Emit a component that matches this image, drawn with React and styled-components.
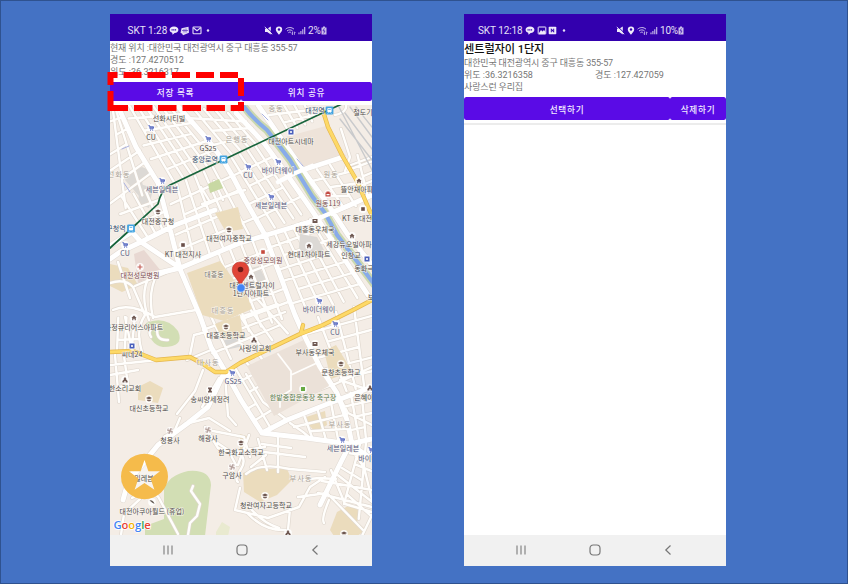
import React from "react";
import styled, { createGlobalStyle } from "styled-components";

const GlobalStyle = createGlobalStyle`
  body { margin: 0; }
  * { box-sizing: border-box; }
  svg { flex: none; }
`;

const Slide = styled.main`
  width: 848px;
  height: 584px;
  padding: 13px 121px 17px 109px;
  border: 1px solid #2f528f;
  background: #4472c4;
  display: flex;
  justify-content: space-between;
  overflow: hidden;
  font-family: Roboto, "Noto Sans CJK KR", sans-serif;
`;

const Phone = styled.section`
  position: relative;
  width: 262px;
  height: 552px;
  background: #fff;
  display: flex;
  flex-direction: column;
`;

const StatusBar = styled.header`
  height: 27px;
  flex: none;
  padding: 6px 0 0 ${(p) => p.$start}px;
  background: #3300ae;
  color: #e6e0f6;
  font-size: 10px;
  line-height: 21px;
  display: flex;
  align-items: center;
  white-space: nowrap;
`;

const Carrier = styled.span`
  flex: none;
  width: ${(p) => p.$width}px;
  letter-spacing: ${(p) => p.$track || 0}px;
`;

const StatusIcons = styled.span`
  flex: none;
  width: ${(p) => p.$width}px;
  height: 10px;
  display: flex;
  gap: ${(p) => p.$gap || 1.5}px;
  align-items: center;
`;

const Battery = styled.span`
  display: flex;
  align-items: center;
  gap: 0.5px;
  letter-spacing: -0.2px;
`;

const Info = styled.div`
  height: ${(p) => p.$height}px;
  flex: none;
  padding-top: ${(p) => p.$top}px;
  color: #757575;
  font-size: 9px;
  line-height: 12.3px;
  white-space: nowrap;
`;

const InfoLine = styled.div`
  height: 12.3px;
  letter-spacing: ${(p) => p.$track || 0}px;
`;

const PlaceName = styled.h1`
  margin: 0;
  height: 15px;
  font-size: 11.2px;
  letter-spacing: -0.1px;
  font-weight: 500;
  line-height: 15px;
  color: #111;
`;

const Coordinates = styled(InfoLine)`
  display: grid;
  grid-template-columns: 131px 131px;
`;

const ButtonRow = styled.div`
  display: grid;
  grid-template-columns: ${(p) => p.$columns};
  height: ${(p) => p.$height}px;
  flex: none;
`;

const ActionButton = styled.button`
  border: 0;
  border-radius: 2.5px;
  padding: 0;
  background: #5a0be6;
  color: #f4edff;
  font: 500 8.6px Roboto, "Noto Sans CJK KR", sans-serif;
  letter-spacing: 0.75px;
`;

const MapArea = styled.div`
  height: 430px;
  margin-top: 4px;
  flex: none;
  overflow: hidden;
`;

const MapDrawing = styled.svg`
  display: block;
  width: 262px;
  height: 430px;
  font-family: "Noto Sans CJK KR", sans-serif;
`;

const Divider = styled.div`
  height: 2px;
  margin-top: 3px;
  background: #ececec;
`;

const NavBar = styled.nav`
  height: 31px;
  flex: none;
  margin-top: auto;
  background: #f1f1f1;
  display: flex;
  align-items: center;
  padding: 0 ${(p) => 103 - p.$start}px 1px ${(p) => p.$start}px;
  justify-content: space-between;
`;

const Highlight = styled.svg`
  position: absolute;
  left: -3px;
  top: 57px;
  width: 138px;
  height: 42px;
`;

/* ---------- status icons ---------- */
const ChatIcon = () => (
  <svg width="10" height="9" viewBox="0 0 10 9">
    <path d="M5 .5C2.200.5.600 1.800.600 3.700c0 1.600 1.100 2.600 2.600 3L3.600 8.700 5.600 7C8 6.800 9.400 5.500 9.400 3.700 9.400 1.800 7.800.5 5 .5Z" fill="#efeafa" />
    <path d="M2.500 3.800h5" stroke="#3300ae" strokeWidth="1.200" strokeDasharray="1.200 .5" />
  </svg>
);
const BadgeIcon = () => (
  <svg width="10" height="10" viewBox="0 0 10 10">
    <path d="M1.500 2.200 8.500.7l.5 6-6 2.500-1-1.800L.5 7Z" fill="#e3dcf5" />
    <path d="M2 4.500h6M4 3v3.500M6 2.500v4" stroke="#5a35bd" strokeWidth=".7" />
  </svg>
);
const MailIcon = () => (
  <svg width="10" height="9" viewBox="0 0 10 9" fill="none" stroke="#e6e0f6" strokeWidth="1.100">
    <rect x="1" y="1" width="8" height="6.800" rx=".7" />
    <path d="m1.300 1.700 3.700 3 3.700-3" />
  </svg>
);
const PictureIcon = () => (
  <svg width="10" height="9" viewBox="0 0 10 9">
    <rect x="1.200" y="1" width="7.600" height="7" rx=".5" fill="none" stroke="#efeafa" />
    <path d="m2 7 2-3 1.500 1.500L7 4l1.500 2v2H2Z" fill="#efeafa" />
  </svg>
);
const NewsIcon = () => (
  <svg width="9" height="9" viewBox="0 0 9 9">
    <rect x=".7" y=".7" width="7.600" height="7.600" rx=".8" fill="#efeafa" />
    <path d="M3.300 6.300V2.800l2.400 3.400V2.700" stroke="#3300ae" fill="none" />
  </svg>
);
const DotIcon = () => (
  <svg width="9" height="9" viewBox="0 0 9 9"><circle cx="5" cy="4.500" r="1.200" fill="#e6e0f6" /></svg>
);
const MuteIcon = () => (
  <svg width="9" height="9" viewBox="0 0 9 9">
    <path d="M1 2.800h2.200L6.800.6v7.800L3.200 6H1Z" fill="#efeafa" />
    <path d="M1.600.4 9 7.600" stroke="#3300ae" strokeWidth="1" />
    <path d="m.8 1 7.400 7.300" stroke="#efeafa" strokeWidth="1" />
  </svg>
);
const PinIcon = () => (
  <svg width="8" height="9" viewBox="0 0 8 9">
    <path d="M4 .4a3.200 3.200 0 0 0-3.200 3.200c0 2 3.200 5.200 3.200 5.200s3.200-3.200 3.200-5.200A3.200 3.200 0 0 0 4 .4Z" fill="#efeafa" />
    <circle cx="4" cy="3.500" r="1.200" fill="#3300ae" />
  </svg>
);
const WifiIcon = () => (
  <svg width="11" height="10" viewBox="0 0 11 10" fill="none" stroke="#cfc4ed" strokeWidth="1">
    <path d="M.6 3.200C3 1 6.700 1 9 3.200M2 5c1.700-1.500 4-1.500 5.600 0M3.400 6.700c.8-.8 2-.8 2.800 0" />
    <path d="M7.500 5.700v3l-1-1M9.400 8.800v-3l1 1" strokeWidth=".8" />
  </svg>
);
const SignalIcon = () => (
  <svg width="8" height="9" viewBox="0 0 8 9" stroke="#cfc4ed" strokeWidth="1.100">
    <path d="M1 8.200V6.500M2.900 8.200V5M4.800 8.200V3.200M6.700 8.200V1" />
  </svg>
);
const BatteryIcon = () => (
  <svg width="6" height="9" viewBox="0 0 6 9">
    <path d="M.5 1.400H2V.4h2v1h1.500v7H.5Z" fill="#cbc0ea" />
    <path d="M3.400 2.400 2 4.900h2L2.600 7.500" stroke="#3300ae" fill="none" strokeWidth=".7" />
  </svg>
);

function SystemNav({ start }) {
  return (
    <NavBar $start={start}>
      <svg width="12" height="12" viewBox="0 0 12 12" stroke="#858585" strokeWidth="1.200">
        <path d="M2 1.500v9M6 1.500v9M10 1.500v9" />
      </svg>
      <svg width="12" height="12" viewBox="0 0 12 12">
        <rect x="1" y="1" width="10" height="10" rx="3.200" fill="none" stroke="#777" strokeWidth="1.200" />
      </svg>
      <svg width="12" height="12" viewBox="0 0 12 12">
        <path d="M8.500 1.500 3.800 6l4.700 4.500" fill="none" stroke="#777" strokeWidth="1.200" />
      </svg>
    </NavBar>
  );
}

/* ---------- map data ---------- */
const majorRoads = [
  "M117 104 136 147 158 183 169 225 180 269 200 316 211 347 225 371 241 400 262 433",
  "M110 259 120 252 141 242 180 268",
  "M141 242 132 232 110 246M141 242 175 225 215 210",
  "M150 275 180 268 240 243 310 222 350 205 372 195",
  "M176 104 208 140 223 160 233 177 245 200 265 235 295 315 303 333 320 367 337 393 347 420 352 444",
  "M236 113 264 143 288 176 311 209 345 260 368 295",
  "M258 105 280 137 305 173 327 203 348 235 372 265",
  "M262 433 306 438 350 444 372 439",
  "M262 433 287 420 330 403 372 387",
  "M225 371 208 407 188 423 158 445 128 482 123 500",
  "M350 444 338 468 320 505",
  "M350 444 372 459",
  "M293 174 303 170 343 157",
];

const minorRoads = [
  "M110 283Q125 278 133 287L145 315M118 262 130 298M150 275Q139 293 149 320M158 272Q147 292 153 318M135 286 177 268",
  "M113 310Q130 302 155 317L196 310M145 315Q135 330 142 352M125 317 132 350",
  "M151 337Q146 330 158 325Q154 341 168 340M190 355 194 335 206 332",
  "M110 365 157 360M115 355 119 402M124 356 128 385M110 375 138 370M110 389 128 385",
  "M203 370 195 391 177 414M219 378 202 407M225 374 228 416 236 425M211 350 187 360",
  "M180 418 174 432 165 436 150 455M185 424 209 418 230 431M205 427 218 448 239 455",
  "M213 431 244 437 250 457M210 438 228 450 236 465M236 450Q248 458 241 469T238 482",
  "M140 499 124 514 121 535M132 498Q153 485 160 500L178 534M123 482Q132 471 153 450",
  "M193 486 191 491 200 504 197 516 190 523 188 535",
  "M238 465 249 435M245 450 265 447M246 474Q260 462 290 469L325 472M267 470 258 439M278 472 278 437",
  "M262 444 291 448M264 452 305 457M251 467 266 455M240 488 235 510 268 518 299 507 310 487 325 477",
  "M250 508Q263 523 279 528M248 514Q265 531 285 530M290 509 288 530M298 497 327 493 363 530",
  "M331 470 345 504 372 512M322 481 372 490M318 493 372 507M350 448 364 467 372 500",
  "M324 523Q321 519 329 500M360 540 372 515M300 480 319 478 336 479",
  "M278 354 291 371 291 390 280 397 280 407M291 375 319 362M246 362 263 382",
  "M246 374 263 402 287 420M260 356 273 376M306 395 334 384M290 423 303 432 310 438",
  "M328 376 348 413 372 425M333 385 372 367M340 380 372 391",
  "M201 187 210 202M214 181 223 200M202 204 245 190",
  "M341 129 350 157 345 171M335 115Q348 112 346 104M355 188 372 181M351 165 372 157",
];

/* Each district: four corners and the number of streets in each direction. */
const districts = [
  [[121, 105], [176, 105], [222, 159], [166, 186], 7, 6],
  [[110, 105], [117, 106], [157, 184], [110, 220], 3, 7],
  [[110, 200], [157, 187], [168, 224], [141, 242], 4, 3],
  [[168, 189], [222, 163], [262, 232], [181, 265], 6, 5],
  [[180, 105], [240, 115], [264, 141], [224, 158], 5, 4],
  [[224, 162], [264, 143], [310, 210], [266, 232], 5, 5],
  [[263, 105], [315, 105], [320, 118], [281, 135], 5, 3],
  [[304, 174], [343, 160], [368, 207], [329, 204], 3, 4],
  [[343, 160], [372, 150], [372, 195], [364, 200], 2, 4],
  [[266, 236], [319, 216], [368, 295], [295, 315], 6, 7],
  [[208, 259], [264, 237], [293, 315], [238, 335], 5, 6],
  [[198, 318], [270, 296], [300, 328], [217, 365], 6, 4],
  [[300, 322], [372, 302], [372, 385], [338, 393], 4, 6],
  [[340, 395], [372, 388], [372, 438], [353, 442], 3, 4],
  [[227, 373], [244, 364], [278, 422], [262, 432], 2, 5],
  [[291, 422], [345, 400], [350, 443], [300, 437], 4, 3],
  [[354, 446], [372, 441], [372, 532], [330, 490], 3, 6],
  [[110, 318], [143, 317], [138, 350], [110, 351], 4, 3],
];

function streetPath([a, b, c, d, across, down]) {
  const mix = (p, q, t) => [p[0] + (q[0] - p[0]) * t, p[1] + (q[1] - p[1]) * t];
  const line = (p, q) => `M${p[0].toFixed(1)} ${p[1].toFixed(1)}L${q[0].toFixed(1)} ${q[1].toFixed(1)}`;
  let path = "";
  for (let i = 1; i < across; i += 1) {
    const t = i / across;
    path += line(mix(a, b, t), mix(d, c, i % 3 === 1 ? t : t + 0.02));
  }
  for (let i = 1; i < down; i += 1) {
    const t = i / down;
    const left = mix(a, d, t);
    const right = mix(b, c, t);
    path += line(i % 3 === 2 ? mix(left, right, 1 / across) : left, i % 4 === 3 ? mix(left, right, 1 - 1 / across) : right);
  }
  return path;
}

const blocks = [
  ["#dcd9d5", "M128 173 142 167 152 171 142 181 146 204 125 180Z"],
  ["#dcd9d5", "M140 184 153 188 149 208 138 203Z"],
  ["#dcd9d5", "M246 269 259 266 266 280 247 293Z"],
  ["#d8d7d5", "M221 341 239 337 244 346 225 350Z"],
  ["#eee3d9", "M285 137 326 126 341 155 304 169Z"],
  ["#ebdcbd", "M110 264 128 268 138 285 122 292 110 286Z"],
  ["#ebdcbd", "M138 387 150 381 163 388 158 403 138 400Z"],
  ["#ebdcbd", "M243 473 256 469 287 469 292 480 277 495 260 502 244 492Z"],
  ["#ebdcbd", "M330 530 337 512 350 505 361 512 357 522 366 530 357 536 334 536Z"],
  ["#ebdcbd", "M303 418 325 411 327 425 315 432Z"],
  ["#ebdcbd", "M240 434 250 437 247 446 240 450Z"],
  ["#d2deb4", "M146 323Q166 315 178 331 185 347 163 347 149 345 146 323Z"],
  ["#d2deb4", "M164 489Q169 475 188 471 210 469 211 485L205 536H145V526L164 519Z"],
  ["#e9ead0", "M216 532 222 522 230 527 228 536H216Z"],
];

/* Large parcels that no street crosses. */
const parcels = [
  ["#ebdcbd", "M187 273 220 261 234 280 246 292 252 309 224 321 202 315Z"],
  ["#ebdcbd", "M215 213 238 207 243 229 226 232Z"],
  ["#e8d8d2", "M134 254 144 250 161 271 138 283Z"],
  ["#ebe1d8", "M247 366 306 339 329 386 274 416Z"],
  ["#ebdcbd", "M324 351 336 345 352 371 331 379Z"],
  ["#ebdcbd", "M215 324 240 315 243 338 222 339Z"],
  ["#dcd9d5", "M300 234 317 237 324 250 308 259 299 248Z"],
  ["#c8d8a3", "M208 184 219 179 223 188 210 193Z"],
];

const labels = [
  ["선화시티빌", 169, 118], ["CU", 151, 137], ["GS25", 208, 148], ["중앙로역", 205, 159, "#365174"],
  ["세븐일레븐", 162, 189, "#53577d"], ["선화동", 119, 174, "area"], ["은행동", 237, 139, "area"],
  ["중동", 276, 108, "area"], ["대전역", 315, 110, "#365174"], ["철도기", 363, 112],
  ["대전아트시네마", 291, 141], ["바이더웨이", 278, 170, "#53577d"], ["CU", 248, 175, "#53577d"],
  ["세븐일레븐", 271, 205, "#53577d"], ["원동", 331, 174, "area"], ["원동119", 328, 203, "#795054"],
  ["뜰안채아파", 357, 189], ["대전중구청", 158, 221], ["구청역", 116, 228, "#365174"],
  ["대전여자중학교", 229, 238], ["CU", 125, 253, "#53577d"], ["KT 대전지사", 183, 254],
  ["대전성모병원", 140, 275, "#7b4b51"], ["대흥동", 214, 274, "#777268"], ["대흥동", 223, 310, "area"],
  ["대흥동우체국", 315, 229], ["KT 동대전", 357, 218], ["현대1차아파트", 309, 254], ["중앙성모의원", 263, 260, "#7b4b51"],
  ["세강듀오빌아파", 349, 244], ["인창교", 351, 255], ["동화극", 364, 268], ["대흥센트럴자이", 252, 285.5], ["1단지아파트", 251, 293],
  ["바이더웨이", 319, 309, "#53577d"], ["보", 371, 297], ["하정큐리어스아파트", 134, 327], ["씨네24", 132, 354],
  ["대흥초등학교", 226, 335], ["사랑의교회", 255, 348], ["부사동우체국", 315, 352], ["CU", 335, 332, "#53577d"],
  ["대사동", 208, 362, "area"], ["GS25", 233, 381, "#53577d"], ["문창초등학교", 341, 372], ["한소리교회", 125, 388],
  ["대신초등학교", 149, 408], ["송씨양세정려", 210, 399], ["한밭종합운동장 축구장", 303, 397, "#58794c"], ["은혜아", 364, 397],
  ["청용사", 170, 440], ["해광사", 208, 438], ["부사동", 340, 424, "area"], ["한국화교소학교", 241, 452],
  ["세븐일레븐", 343, 448, "#53577d"], ["바이더", 368, 458, "#53577d"], ["구암사", 232, 475], ["부사동", 301, 478, "area"],
  ["청란여자고등학교", 266, 505], ["대전아쿠아월드 (휴업)", 152, 511], ["일레븐", 144, 478],
];

const places = [
  ["cart", 151, 128], ["cart", 208, 139], ["cart", 162, 181], ["cart", 248, 167], ["cart", 278, 162],
  ["cart", 271, 197], ["cart", 125, 245], ["cart", 319, 301], ["cart", 335, 324], ["cart", 232, 373],
  ["cart", 342, 440], ["cart", 371, 450], ["film", 291, 132], ["film", 132, 346], ["film", 367, 259],
  ["school", 229, 230], ["school", 226, 327], ["school", 341, 364], ["school", 149, 399], ["school", 241, 443],
  ["school", 265, 496], ["school", 158, 212], ["school", 344, 534], ["mail", 315, 221], ["mail", 315, 344],
  ["home", 309, 246], ["home", 352, 236], ["home", 359, 181], ["home", 251, 277], ["home", 134, 318],
  ["church", 254, 340], ["church", 125, 380], ["church", 288, 533], ["church", 370, 388], ["temple", 170, 431],
  ["temple", 208, 430], ["temple", 232, 467], ["office", 183, 245], ["office", 363, 209], ["gate", 210, 390],
  ["fire", 328, 194], ["clinic", 263, 252], ["hospital", 140, 267], ["park", 303, 389], ["leaf", 152, 502],
];

const placeShapes = {
  cart: <path d="M-2.600-2.300h1.300L-.9.900H2L2.600-1.200h-3.600M-.8-.2H2.200M-.9 2.200H0M1.300 2.200h.9" fill="none" stroke="#5264bf" strokeWidth="1" />,
  film: <path d="M-2.500-2.500h5v5h-5ZM-.8-1h1.600v2h-1.600Z" fillRule="evenodd" fill="#4b60bb" />,
  school: <path d="m-3-1 3-1.500L3-1 0 .5ZM-1.800.6 0 1.300 1.800.6v1.200q-1.800 1-3.600 0Z" fill="#6e5750" />,
  mail: <path d="M-2.500-2h5v4h-5ZM-1.500-1h3L0 .3Z" fillRule="evenodd" fill="#6e5750" />,
  home: <path d="M-2.600 0 0-2.400 2.600 0h-.8v2.200H.6V.8H-.6v1.400h-1.200V0Z" fill="#6e5750" />,
  church: <path d="M-.4-3h.8v1H1.200v.7H.6L2.600 1v1.500H.6V1h-1.200v1.500h-2V1l2-2.300h-.6V-2h.8Z" fill="#6e5750" />,
  temple: <path d="M0-2.300v4.600M-2.300 0h4.600M0-2.200h2.200M2.200 0v2.200M0 2.200h-2.200M-2.200 0v-2.200" stroke="#8a6b65" strokeWidth=".7" fill="none" transform="rotate(8)" />,
  office: <path d="M-1.800-1.800h3.600v3.600h-3.600Z" fill="#6a4f49" />,
  gate: <path d="M-2-2.500h4v1L.8 0 2 1.500v1h-4v-1L-.8 0-2-1.500Z" fill="#6e5750" />,
  fire: <path d="M-2.500-1.500h1v-1h3v1h1v4h-5ZM-1.500 0h3v1.300h-3Z" fillRule="evenodd" fill="#c24b43" />,
  clinic: <path d="M-1.800-1.800h3.600v3.600h-3.600Z" fill="#c54a3c" />,
  hospital: <path d="M-2.500 0h5M0-2.500v5" stroke="#c6645d" strokeWidth="1.200" />,
  park: <path d="M-2-2h4v4h-4Z" fill="#67aa43" />,
  leaf: <path d="M-2.500-1.500Q1-2.500 2.500 2L0 .5Z" fill="#665d57" />,
};

const MapLabel = styled.text`
  font-size: ${(p) => (p.$area ? 7.3 : 7)}px;
  letter-spacing: ${(p) => (p.$area ? 0.9 : 0.05)}px;
  fill: ${(p) => p.$tone};
  stroke: #faf7f2;
  stroke-width: 1.2px;
  stroke-opacity: 0.85;
  paint-order: stroke;
  text-anchor: middle;
`;

const LogoText = styled.text`
  font-family: "Open Sans", sans-serif;
  font-size: 11.3px;
  font-weight: 600;
  letter-spacing: -0.15px;
  stroke: #fff;
  stroke-width: 1.5px;
  paint-order: stroke;
`;

const logoLetters = [["G", "#4285f4"], ["o", "#e94335"], ["o", "#f4b400"], ["g", "#4285f4"], ["l", "#34a853"], ["e", "#e94335"]];

function Station({ x, y }) {
  return (
    <g transform={`translate(${x} ${y})`}>
      <rect x="-3.900" y="-4" width="7.800" height="8" rx="1.200" fill="#43a4e1" />
      <rect x="-2.100" y="-2.600" width="4.200" height="4.400" rx=".8" fill="#fff" />
      <path d="M-1.300-1.200h2.600" stroke="#43a4e1" strokeWidth=".9" />
      <path d="m-1.800 3 .8-1M1.800 3 1 2" stroke="#fff" strokeWidth=".7" />
    </g>
  );
}

function CityMap() {
  const streets = [...districts.map(streetPath), ...minorRoads].join("");
  const avenues = majorRoads.join("");
  const river = "M242 104Q253 119 267 130L290 160 312 196 325 213 337 235 353 256 374 284";
  const bridges = "M278 182 293 174 312 166M296 226 310 222 350 205";
  const yellow = "M110 352 133 351 156 360 190 357 203 364 215 372 226 372 240 363 273 347 300 334 323 325 353 310 372 300M323 111 328 127 343 157 357 181 368 207 375 222M303 325 301 333 311 330";
  return (
    <MapDrawing viewBox="110 105 262 430">
      <rect x="110" y="105" width="262" height="431" fill="#f4ede6" />
      {blocks.map(([fill, d]) => <path key={d} d={d} fill={fill} />)}
      <g fill="none" strokeLinejoin="round" strokeLinecap="round">
        <path d={streets} stroke="#e0d8cf" strokeWidth="3.700" />
        <path d={avenues} stroke="#e2dbd4" strokeWidth="6" />
        <path d={streets} stroke="#fffefc" strokeWidth="2.400" />
      </g>
      {parcels.map(([fill, d]) => <path key={d} d={d} fill={fill} />)}
      <g fill="none" strokeLinejoin="round" strokeLinecap="round">
        <path d="M278 354 291 371 291 390 280 397 280 407M291 375 319 362" stroke="#fffefc" strokeWidth="1.800" />
        <path d={avenues} stroke="#fff" strokeWidth="4.900" />
        <path d={river} stroke="#cbd8ae" strokeWidth="8" />
        <path d={river} stroke="#88abe9" strokeWidth="4" />
        <path d={bridges} stroke="#fff" strokeWidth="4.600" />
        <path d="M340 119 372 160M345 113 372 149M350 107 372 137M356 107 372 127M339 107 372 170" stroke="#c9cacc" strokeWidth="1.400" />
        <path d={yellow} stroke="#e4b64d" strokeWidth="4.300" />
        <path d={yellow} stroke="#fdd967" strokeWidth="3" />
        <path d="M110 248 131 229 158 204Q161 190 170 185L223 160 242 151 333 108 342 104" stroke="#17643b" strokeWidth="1.700" />
        <path d="M122 149 129 146M124 183 130 192M262 114 268 120M297 159 303 166" stroke="#aab2e1" strokeWidth="1" />
      </g>
      <Station x={223.5} y={159.5} />
      <Station x={329.5} y={110.5} />
      <Station x={131} y={228.5} />
      {places.map(([kind, x, y]) => (
        <g key={`${kind}-${x}-${y}`} transform={`translate(${x} ${y})`}>
          <circle r="3.900" fill="#fff" fillOpacity=".85" />
          {placeShapes[kind]}
        </g>
      ))}
      <path d="m144.500 460 3.900 11.200H160l-9.400 7.400 3.800 11.200-9.900-6.800-9.900 6.800 3.800-11.200-9.400-7.400h11.600Z" fill="#fff" fillOpacity=".4" />
      {labels.map(([name, x, y, tone]) => (
        <MapLabel key={`${name}-${x}-${y}`} x={x} y={y + 2.6} $area={tone === "area"} $tone={tone === "area" ? "#aaa398" : tone || "#504c49"}>
          {name}
        </MapLabel>
      ))}
      <path d="M240.500 262c-5 0-8.200 3.400-8.200 8 0 6.500 6.400 8.700 8.200 17 1.800-8.300 8.200-10.500 8.200-17 0-4.600-3.200-8-8.200-8Z" fill="#e04437" stroke="#b9372d" strokeWidth=".6" />
      <circle cx="240.500" cy="269.500" r="2.800" fill="#711a16" />
      <circle cx="241" cy="288" r="4.200" fill="#4285f4" stroke="#dce8fc" strokeWidth=".8" />
      <path fillRule="evenodd" fill="#f5bb4b" d="M121 476.500a23.500 22.700 0 1 0 47 0a23.500 22.700 0 1 0-47 0ZM144.500 460l-3.900 11.200H129l9.400 7.400-3.800 11.200 9.900-6.800 9.900 6.800-3.800-11.200 9.400-7.400h-11.600Z" />
      <LogoText x="113.500" y="528.500">
        {logoLetters.map(([letter, fill], i) => <tspan key={i} fill={fill}>{letter}</tspan>)}
      </LogoText>
    </MapDrawing>
  );
}

function LocationPhone() {
  return (
    <Phone>
      <StatusBar $start={17.5}>
        <Carrier $width={41}>SKT 1:28</Carrier>
        <StatusIcons $width={95.5}><ChatIcon /><BadgeIcon /><MailIcon /><DotIcon /></StatusIcons>
        <StatusIcons $width={44} $gap={2}><MuteIcon /><PinIcon /><WifiIcon /><SignalIcon /></StatusIcons>
        <Battery>2%<BatteryIcon /></Battery>
      </StatusBar>
      <Info $height={41} $top={0.8}>
        <InfoLine $track={-0.16}>현재 위치 :대한민국 대전광역시 중구 대흥동 355-57</InfoLine>
        <InfoLine>경도 :127.4270512</InfoLine>
        <InfoLine>위도 :36.3216317</InfoLine>
      </Info>
      <ButtonRow $height={19} $columns="131px 131px">
        <ActionButton>저장 목록</ActionButton>
        <ActionButton>위치 공유</ActionButton>
      </ButtonRow>
      <MapArea><CityMap /></MapArea>
      <SystemNav start={52} />
      <Highlight viewBox="107 71 138 42">
        <path d="M110.500 85V75H117.500M123.500 75h18M147.500 75h18M172 75h18M196 75h18M220 75h18M241 78v18M241 102v6H230.700M225 108h-18.500M201 108h-18.500M176.500 108h-18.500M152.500 108h-18.500M128 108h-17.500V91" fill="none" stroke="#f00" strokeWidth="6" />
      </Highlight>
    </Phone>
  );
}

function SavedPhone() {
  return (
    <Phone>
      <StatusBar $start={14}>
        <Carrier $width={47} $track={-0.08}>SKT 12:18</Carrier>
        <StatusIcons $width={91} $gap={1.7}><ChatIcon /><PictureIcon /><NewsIcon /><DotIcon /></StatusIcons>
        <StatusIcons $width={44} $gap={2}><MuteIcon /><PinIcon /><WifiIcon /><SignalIcon /></StatusIcons>
        <Battery>10%<BatteryIcon /></Battery>
      </StatusBar>
      <Info $height={56} $top={0.8}>
        <PlaceName>센트럴자이 1단지</PlaceName>
        <InfoLine $track={-0.15}>대한민국 대전광역시 중구 대흥동 355-57</InfoLine>
        <Coordinates><span>위도 :36.3216358</span><span>경도 :127.427059</span></Coordinates>
        <InfoLine $track={-0.15}>사랑스런 우리집</InfoLine>
      </Info>
      <ButtonRow $height={23} $columns="206px 56px">
        <ActionButton>선택하기</ActionButton>
        <ActionButton>삭제하기</ActionButton>
      </ButtonRow>
      <Divider />
      <SystemNav start={51} />
    </Phone>
  );
}

export default function App() {
  return (
    <>
      <GlobalStyle />
      <Slide>
        <LocationPhone />
        <SavedPhone />
      </Slide>
    </>
  );
}
